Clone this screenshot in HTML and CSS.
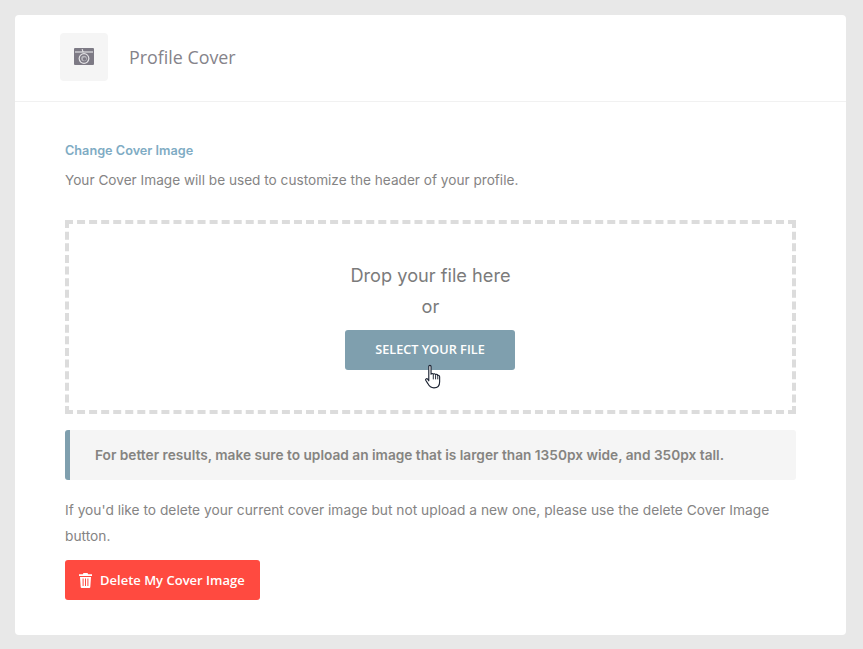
FILE: index.html
```html
<!DOCTYPE html>
<html lang="en">
<head>
<meta charset="utf-8">
<title>Profile Cover</title>
<link rel="stylesheet" href="styles.css">
</head>
<body>
<main class="card">
  <header class="card-head">
    <div class="head-icon">
      <svg width="20" height="17" viewBox="0 0 20 17"><path fill="#7d7a85" fill-rule="evenodd" d="M1 0h18a1 1 0 0 1 1 1v15a1 1 0 0 1-1 1H1a1 1 0 0 1-1-1V1a1 1 0 0 1 1-1zM1 3.500v1h18v-1H9.500L8.500 1H7.600l1 2.500z"/><circle cx="10" cy="10.500" r="5.400" fill="#e4e3e6"/><circle cx="10" cy="10.500" r="4.200" fill="#7d7a85"/><circle cx="10" cy="10.500" r="2.800" fill="#b9b8be"/><circle cx="10.500" cy="11" r="1.700" fill="#7d7a85"/></svg>
    </div>
    <h1 class="head-title">Profile Cover</h1>
  </header>
  <section class="card-body">
    <h2 class="section-title">Change Cover Image</h2>
    <p class="text intro">Your Cover Image will be used to customize the header of your profile.</p>
    <div class="dropzone">
      <p class="drop-line">Drop your file here</p>
      <p class="drop-line">or</p>
      <div class="select-wrap">
        <button class="btn-select">SELECT YOUR FILE</button>
        <svg class="cursor" width="17" height="26" viewBox="0 0 18 26"><path fill="#fff" stroke="#1d2433" stroke-width="1.200" stroke-linejoin="round" d="M4 1.800c0-1.400 2.400-1.400 2.400 0V10c0-.8 2.200-1 2.400 .2 .1-.9 2.200-1 2.400 .4 .2-.8 2.100-.6 2.200 .8.100 0 .1 0 .1 0 .5-.5 2 0 2 1.300v5.300c0 4-2 6.500-6 6.500-3.500 0-5-1.500-6.500-4.500L.8 16.500c-.6-1.300 1-2.400 2-1.200L4 17z"/><path fill="none" stroke="#1d2433" stroke-width="1" d="M8.800 10.500v5M11.200 11v4.500M13.500 11.500v4"/></svg>
      </div>
    </div>
    <div class="note">For better results, make sure to upload an image that is larger than 1350px wide, and 350px tall.</div>
    <p class="text delete-text">If you'd like to delete your current cover image but not upload a new one, please use the delete Cover Image button.</p>
    <button class="btn-delete">
      <svg width="13" height="15" viewBox="0 0 13 15"><path fill="#fff" fill-rule="evenodd" d="M4.500 0h4l.7 1.300H13v1.700H0V1.300h3.800zM1 4h11l-.7 10a1 1 0 0 1-1 1H2.700a1 1 0 0 1-1-1zM3.600 5.500v7.500h1V5.500zM6 5.500v7.500h1V5.500zM8.400 5.500v7.500h1V5.500z"/></svg>
      <span>Delete My Cover Image</span>
    </button>
  </section>
</main>
</body>
</html>
```

FILE: styles.css
```css
* { box-sizing: border-box; }
html, body { margin: 0; padding: 0; }
body {
  background: #e8e8e8;
  padding: 15px 17px 14px 15px;
  font-family: "Inter", "Liberation Sans", sans-serif;
  color: #7f7f7f;
}
.card {
  background: #fff;
  border-radius: 4px;
  height: 620px;
}
.card-head {
  display: flex;
  align-items: center;
  gap: 21px;
  height: 87px;
  padding: 0 45px 3px;
  border-bottom: 1px solid #f1f1f1;
}
.head-icon {
  width: 48px;
  height: 48px;
  background: #f5f5f5;
  border-radius: 4px;
  display: flex;
  align-items: center;
  justify-content: center;
}
.head-title {
  margin: 0;
  font: 400 17.85px/24px "Open Sans", sans-serif;
  color: #85838a;
}
.card-body {
  padding: 39px 50px 0;
}
.section-title {
  margin: 0;
  font: 600 12.7px/20px "Inter", sans-serif;
  color: #7facc4;
}
.text {
  margin: 0;
  font-size: 13.6px;
  line-height: 26px;
  color: #858484;
}
.intro {
  margin-top: 6px;
  font-size: 13.63px;
}
.dropzone {
  margin-top: 27px;
  height: 194px;
  border: 4px dashed #dcdcdc;
  text-align: center;
  padding-top: 36px;
}
.drop-line {
  margin: 0;
  font-size: 18.2px;
  line-height: 31px;
  color: #7b7b7b;
}
.select-wrap {
  position: relative;
  width: 170px;
  margin: 8px 0 0 276px;
}
.btn-select {
  display: block;
  width: 170px;
  height: 40px;
  padding: 0 0 2px;
  border: 0;
  border-radius: 3px;
  background: #7f9fae;
  color: #fff;
  font: 600 12.7px "Open Sans", sans-serif;
}
.cursor {
  position: absolute;
  left: 80px;
  top: 34px;
}
.note {
  margin-top: 16px;
  height: 50px;
  padding-left: 25px;
  display: flex;
  align-items: center;
  background: #f5f5f5;
  border-left: 5px solid #7f9fae;
  border-radius: 3px;
  font-size: 13.7px;
  font-weight: 600;
  color: #858481;
}
.delete-text {
  margin-top: 17px;
  font-size: 13.75px;
}
.btn-delete {
  margin-top: 11px;
  display: flex;
  align-items: center;
  gap: 8px;
  width: 195px;
  height: 40px;
  padding: 0 0 0 14px;
  border: 0;
  border-radius: 3px;
  background: #ff4a40;
  color: #fff;
  font: 600 13px "Open Sans", sans-serif;
}
```
